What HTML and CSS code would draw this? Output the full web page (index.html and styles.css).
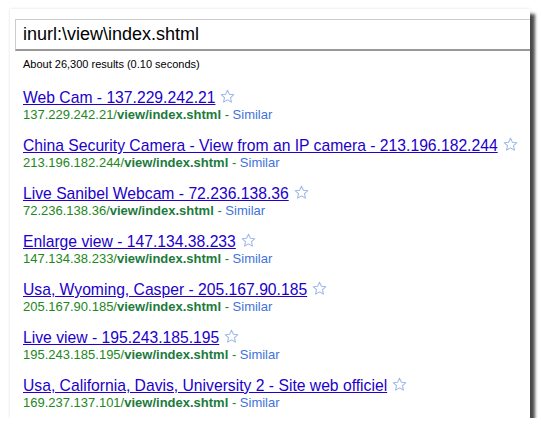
FILE: index.html
```html
<!DOCTYPE html>
<html lang="en">
<head>
    <meta charset="UTF-8">
    <title>inurl:\view\index.shtml</title>
    <link rel="stylesheet" href="styles.css">
</head>
<body>
<div class="panel">
    <div class="search-box">inurl:\view\index.shtml</div>
    <div class="stats">About 26,300 results (0.10 seconds)</div>

    <ol class="results">
        <li>
            <h3><a href="#">Web Cam - 137.229.242.21</a><svg class="star" viewBox="0 0 16 16"><path d="M8 1.2l2 4.4 4.8.5-3.6 3.2 1 4.7L8 11.6 3.8 14l1-4.7L1.2 6.1l4.8-.5z"/></svg></h3>
            <div class="url">137.229.242.21/<b>view/index.shtml</b> - <a href="#" class="similar">Similar</a></div>
        </li>
        <li>
            <h3><a href="#">China Security Camera - View from an IP camera - 213.196.182.244</a><svg class="star" viewBox="0 0 16 16"><path d="M8 1.2l2 4.4 4.8.5-3.6 3.2 1 4.7L8 11.6 3.8 14l1-4.7L1.2 6.1l4.8-.5z"/></svg></h3>
            <div class="url">213.196.182.244/<b>view/index.shtml</b> - <a href="#" class="similar">Similar</a></div>
        </li>
        <li>
            <h3><a href="#">Live Sanibel Webcam - 72.236.138.36</a><svg class="star" viewBox="0 0 16 16"><path d="M8 1.2l2 4.4 4.8.5-3.6 3.2 1 4.7L8 11.6 3.8 14l1-4.7L1.2 6.1l4.8-.5z"/></svg></h3>
            <div class="url">72.236.138.36/<b>view/index.shtml</b> - <a href="#" class="similar">Similar</a></div>
        </li>
        <li>
            <h3><a href="#">Enlarge view - 147.134.38.233</a><svg class="star" viewBox="0 0 16 16"><path d="M8 1.2l2 4.4 4.8.5-3.6 3.2 1 4.7L8 11.6 3.8 14l1-4.7L1.2 6.1l4.8-.5z"/></svg></h3>
            <div class="url">147.134.38.233/<b>view/index.shtml</b> - <a href="#" class="similar">Similar</a></div>
        </li>
        <li>
            <h3><a href="#">Usa, Wyoming, Casper - 205.167.90.185</a><svg class="star" viewBox="0 0 16 16"><path d="M8 1.2l2 4.4 4.8.5-3.6 3.2 1 4.7L8 11.6 3.8 14l1-4.7L1.2 6.1l4.8-.5z"/></svg></h3>
            <div class="url">205.167.90.185/<b>view/index.shtml</b> - <a href="#" class="similar">Similar</a></div>
        </li>
        <li>
            <h3><a href="#">Live view - 195.243.185.195</a><svg class="star" viewBox="0 0 16 16"><path d="M8 1.2l2 4.4 4.8.5-3.6 3.2 1 4.7L8 11.6 3.8 14l1-4.7L1.2 6.1l4.8-.5z"/></svg></h3>
            <div class="url">195.243.185.195/<b>view/index.shtml</b> - <a href="#" class="similar">Similar</a></div>
        </li>
        <li>
            <h3><a href="#">Usa, California, Davis, University 2 - Site web officiel</a><svg class="star" viewBox="0 0 16 16"><path d="M8 1.2l2 4.4 4.8.5-3.6 3.2 1 4.7L8 11.6 3.8 14l1-4.7L1.2 6.1l4.8-.5z"/></svg></h3>
            <div class="url">169.237.137.101/<b>view/index.shtml</b> - <a href="#" class="similar">Similar</a></div>
        </li>
    </ol>
</div>
</body>
</html>
```

FILE: styles.css
```css
body {
    margin: 0;
    background-color: #ffffff;
    font-family: Arial, "Liberation Sans", sans-serif;
}
.panel {
    width: 520px;
    height: 409px;
    margin: 9px 0 0 10px;
    background-color: #ffffff;
    box-shadow: 0 0 3px rgba(0, 0, 0, 0.12), 5px 5px 3px rgba(0, 0, 0, 0.7);
    overflow: hidden;
}
.search-box {
    margin: 10px 0 0 5px;
    height: 29px;
    padding-left: 7px;
    border: 1px solid #cccccc;
    border-right: none;
    border-bottom: 2px solid #999999;
    font-size: 18px;
    line-height: 29px;
    color: #000000;
}
.stats {
    margin: 7px 0 0 13px;
    font-size: 11px;
    color: #000000;
}
.results {
    list-style: none;
    margin: 18px 0 0 13px;
    padding: 0;
}
.results li {
    height: 48px;
}
.results h3 {
    margin: 0;
    font-size: 15.7px;
    font-weight: normal;
    line-height: 19px;
}
.results h3 a {
    color: #2200cc;
}
.star {
    width: 15px;
    height: 15px;
    margin-left: 5px;
    vertical-align: -1px;
    fill: #ffffff;
    stroke: #9fb6e8;
    stroke-width: 1.1;
    stroke-linejoin: round;
}
.url {
    font-size: 13px;
    line-height: 15px;
    color: #228822;
}
.url b {
    color: #1c7a3c;
}
.similar {
    color: #4272db;
    text-decoration: none;
}
```
